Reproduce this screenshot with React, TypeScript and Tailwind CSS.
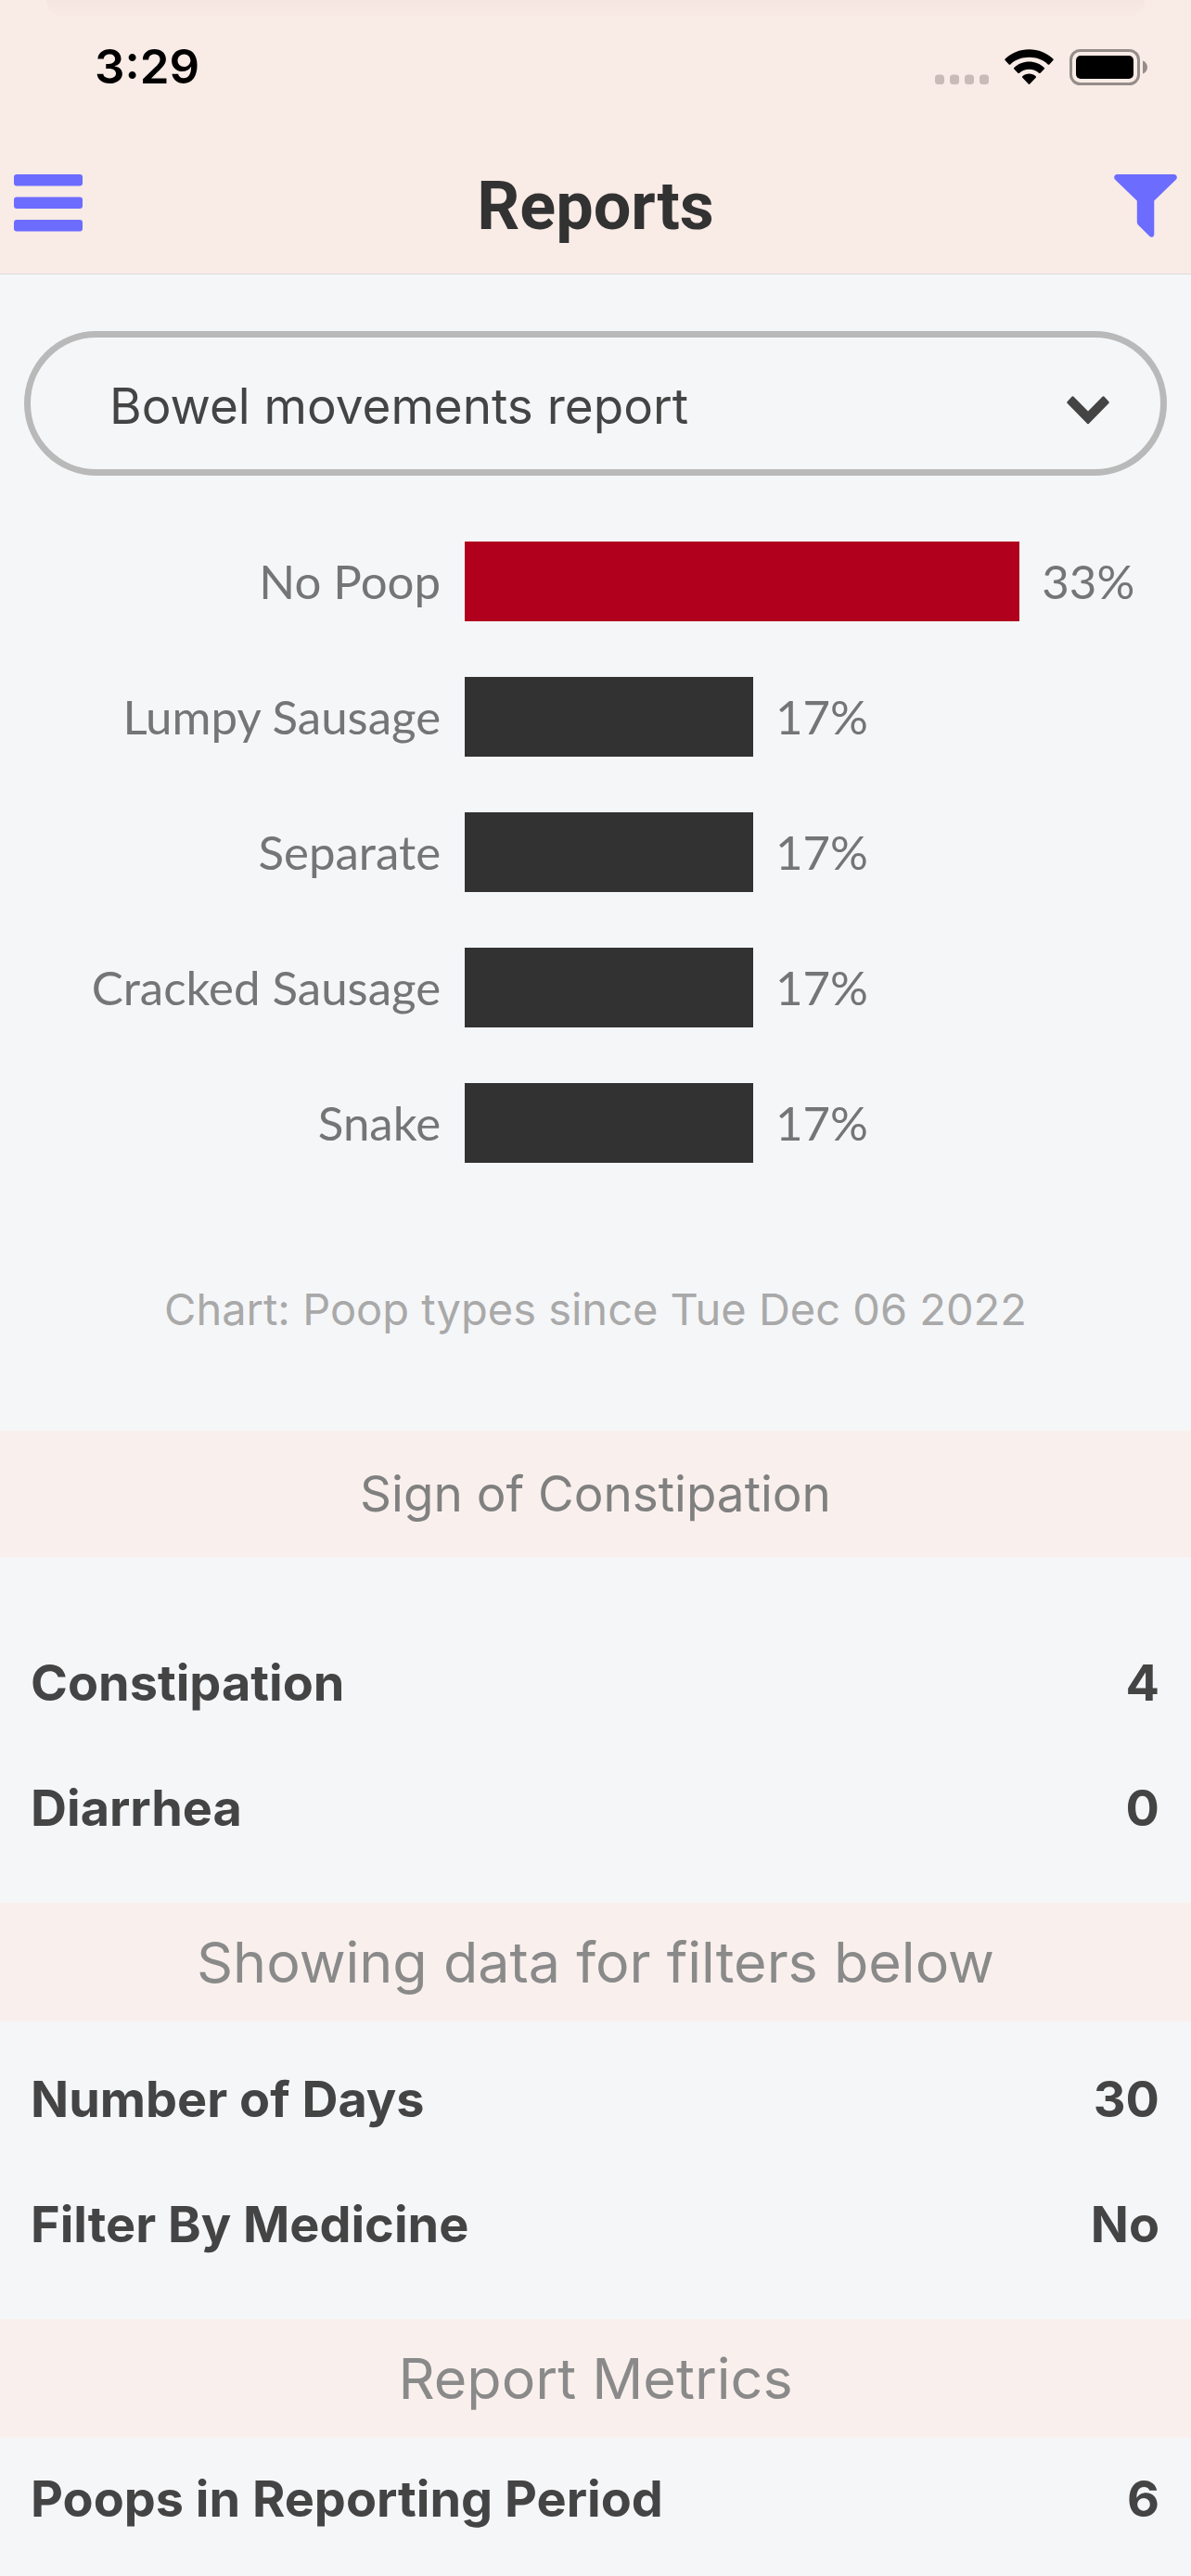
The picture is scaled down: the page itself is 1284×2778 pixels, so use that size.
import { useState } from "react";

type Row = { label: string; value: string };

const bars = [
  { label: "No Poop", value: "33%", width: 76.4, highlight: true },
  { label: "Lumpy Sausage", value: "17%", width: 39.7, highlight: false },
  { label: "Separate", value: "17%", width: 39.7, highlight: false },
  { label: "Cracked Sausage", value: "17%", width: 39.7, highlight: false },
  { label: "Snake", value: "17%", width: 39.7, highlight: false },
];

const signs: Row[] = [
  { label: "Constipation", value: "4" },
  { label: "Diarrhea", value: "0" },
];
const filters: Row[] = [
  { label: "Number of Days", value: "30" },
  { label: "Filter By Medicine", value: "No" },
];
const metrics: Row[] = [{ label: "Poops in Reporting Period", value: "6" }];

function StatusBar() {
  return (
    <div className="flex items-center justify-between pt-[37px] pr-[47px] pl-[102px]">
      <span className="text-[51px] leading-[70px] font-semibold text-black">3:29</span>
      <div className="flex items-center">
        <svg width="58" height="39" viewBox="0 0 58 39" className="mr-[17px]" aria-label="No signal">
          {[0, 16, 32, 48].map((x) => (
            <rect key={x} x={x} y="27.500" width="10" height="10.500" rx="3.500" fill="#c7bcb8" />
          ))}
        </svg>
        <svg width="53" height="39" viewBox="0 0 53 39" className="mr-[17px]" aria-label="Wi-Fi">
          <path d="M26.500 0.200C16.500 0.200 7.300 4.100 0.600 10.600c-.5.500-.5 1 0 1.500l4.100 4.300c.5.500 1.100.500 1.600 0C11.500 11.500 18.600 8.800 26.500 8.800s15 2.700 20.200 7.600c.5.500 1.100.500 1.600 0l4.100-4.300c.5-.5.5-1 0-1.500C45.700 4.100 36.500.2 26.500.2Z" />
          <path d="M26.500 13.500c-6.200 0-11.900 2.400-16.200 6.400-.5.500-.5 1 0 1.500l4.100 4.300c.5.500 1.100.5 1.600 0 2.800-2.500 6.400-3.900 10.500-3.900s7.700 1.400 10.500 3.900c.5.500 1.100.5 1.600 0l4.100-4.300c.5-.5.5-1 0-1.500-4.300-4-10-6.400-16.200-6.400Z" />
          <path d="M26.500 26.500c-2.800 0-5.200 1-7.200 2.800-.5.500-.5 1 0 1.500l6.400 6.700c.5.500 1.100.5 1.600 0l6.400-6.700c.5-.5.5-1 0-1.500-2-1.800-4.400-2.800-7.200-2.800Z" />
        </svg>
        <svg width="84" height="39" viewBox="0 0 84 39" aria-label="Battery full">
          <rect x="1.500" y="1.500" width="73" height="36" rx="10" fill="none" stroke="#958d8a" strokeWidth="3" />
          <rect x="7" y="7" width="62" height="25" rx="5" />
          <path d="M79 12.500c3 1 5 3.800 5 7s-2 6-5 7Z" fill="#958d8a" />
        </svg>
      </div>
    </div>
  );
}

function Band({ title, large }: { title: string; large?: boolean }) {
  return (
    <h2
      className={
        large
          ? "bg-[#f9f0ed] py-[24px] text-center text-[61px] leading-[80px] text-[#8a8a8a]"
          : "bg-[#f9f0ed] py-[28px] text-center text-[53px] leading-[80px] text-[#808080]"
      }
    >
      {title}
    </h2>
  );
}

function Rows({ rows, className }: { rows: Row[]; className: string }) {
  return (
    <dl className={`flex flex-col gap-[71px] pr-[34px] pl-[33px] ${className}`}>
      {rows.map((row) => (
        <div
          key={row.label}
          className="flex justify-between text-[54px] leading-[64px] font-bold text-[#444444]"
        >
          <dt>{row.label}</dt>
          <dd>{row.value}</dd>
        </div>
      ))}
    </dl>
  );
}

export default function App() {
  const [report, setReport] = useState("bowel");

  return (
    <div className="min-h-screen overflow-hidden bg-[#f5f6f8] font-['Inter',sans-serif]">
      <header className="relative border-b border-[#dcdadb] bg-[#f9ebe6]">
        <div className="absolute inset-x-[50px] top-0 h-[17px] rounded-b-full bg-gradient-to-b from-[#f5e6e1] to-[#f8eae5]" />
        <StatusBar />
        <div className="flex items-center justify-between px-[15px] pt-[64px] pb-[20px]">
          <button type="button" aria-label="Open menu" className="pb-[8px]">
            <svg width="74" height="62" viewBox="0 0 74 62" fill="#6c6cff">
              <rect y="0" width="74" height="12.500" rx="3" />
              <rect y="24.500" width="74" height="12.500" rx="3" />
              <rect y="49" width="74" height="12.500" rx="3" />
            </svg>
          </button>
          <h1 className="font-['Roboto',sans-serif] text-[72px] leading-[104px] font-bold text-[#323232]">Reports</h1>
          <button type="button" aria-label="Filter reports" className="flex w-[74px] justify-end pb-[2px]">
            <svg width="68" height="68" viewBox="0 0 68 68" fill="#6c6cff">
              <path d="M3.500 0H64.500C67.500 0 68.800 3.200 67 5.400L43.300 28.500V64.500C43.300 67.500 40.500 68.800 38.300 66.800L26 54.500C25.200 53.600 24.800 52.700 24.800 51.500V28.500L1 5.400C-.8 3.200.5 0 3.500 0Z" />
            </svg>
          </button>
        </div>
      </header>

      <main>
        <div className="relative mx-[26px] mt-[61px]">
          <select
            aria-label="Report type"
            value={report}
            onChange={(event) => setReport(event.target.value)}
            className="block h-[156px] w-full appearance-none rounded-full border-[7px] border-[#b9b9b9] bg-transparent pt-[8px] pr-[120px] pl-[85px] text-[53px] text-[#444444]"
          >
            <option value="bowel">Bowel movements report</option>
          </select>
          <svg
            width="46"
            height="31"
            viewBox="0 0 46 31"
            fill="#444444"
            className="pointer-events-none absolute top-[70px] right-[62px]"
            aria-hidden="true"
          >
            <path d="M5.500.7Q6.500-.2 7.500.7L23 16.500 38.500.7Q39.500-.2 40.500.7L45.300 6Q46.200 7 45.300 8L24 29.800Q23 30.800 22 29.800L.7 8Q-.2 7 .7 6Z" />
          </svg>
        </div>

        <figure className="pt-[71px]">
          <div className="flex flex-col gap-[60px] font-['Lato',sans-serif] text-[51px] leading-[86px] text-[#757575]">
            {bars.map((bar) => (
              <div key={bar.label} className="flex h-[86px] gap-[26px]">
                <span className="w-[37%] text-right">{bar.label}</span>
                <div className="flex flex-1">
                  <div
                    className={bar.highlight ? "bg-[#b0001e]" : "bg-[#323232]"}
                    style={{ width: `${bar.width}%` }}
                  />
                  <span className="pl-6">{bar.value}</span>
                </div>
              </div>
            ))}
          </div>
          <figcaption className="pt-[121px] pb-[94px] text-center text-[47px] leading-[74px] text-[#a9a9a9]">
            Chart: Poop types since Tue Dec 06 2022
          </figcaption>
        </figure>

        <Band title="Sign of Constipation" />
        <Rows rows={signs} className="pt-[104px] pb-[70px]" />
        <Band title="Showing data for filters below" large />
        <Rows rows={filters} className="pt-[52px] pb-[70px]" />
        <Band title="Report Metrics" large />
        <Rows rows={metrics} className="pt-[34px] pb-[50px]" />
      </main>
    </div>
  );
}
